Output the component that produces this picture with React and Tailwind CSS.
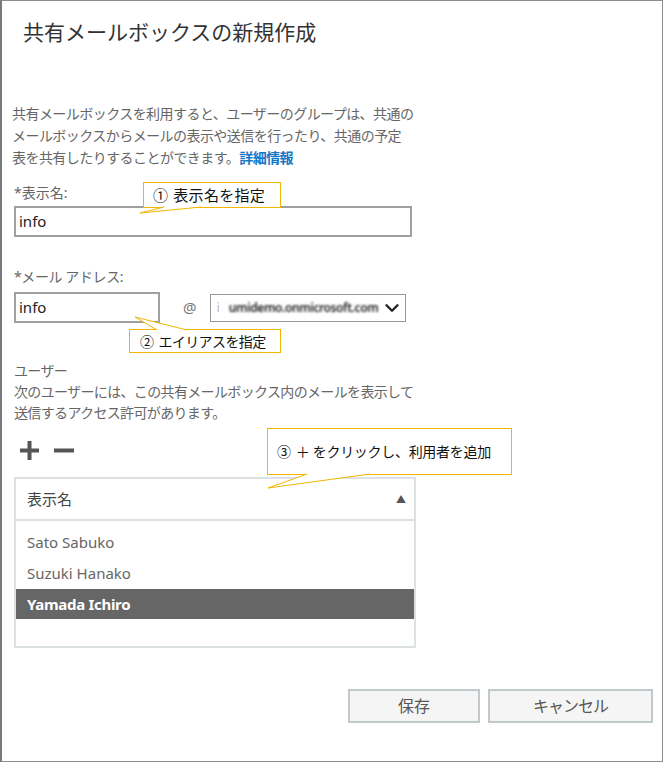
import React from "react";
import { ChevronDown } from "lucide-react";

const jp = { fontFamily: '"Noto Sans", "Noto Sans CJK JP", sans-serif' };

function Callout({ box, tail, num, text, textClass = "" }) {
  return (
    <>
      <div
        className={`absolute border border-[#f2b600] bg-white flex items-center text-[#111] ${textClass}`}
        style={{ left: box[0], top: box[1], width: box[2], height: box[3] }}
      >
        <span className="mr-[5px]">{num}</span>
        <span>{text}</span>
      </div>
      <svg className="absolute left-0 top-0 pointer-events-none" width="663" height="762">
        <polygon points={tail} fill="white" stroke="none" />
        <polyline points={tail} fill="none" stroke="#f2b600" strokeWidth="1" />
      </svg>
    </>
  );
}

export default function App() {
  return (
    <div style={jp} className="w-[663px] h-[762px] bg-white">
      <div className="relative w-[663px] h-[762px] border border-[#8c8c8c] border-l-2 border-l-[#7a7a7a] bg-white flex flex-col overflow-hidden">
        <h1 className="pl-[21px] pt-[17px] text-[21px] leading-[28px] text-[#333] font-normal tracking-[0px]">
          共有メールボックスの新規作成
        </h1>

        <div className="pl-[10px] mt-[57px] text-[14px] leading-[22px] text-[#666] tracking-[-0.55px]">
          <div>共有メールボックスを利用すると、ユーザーのグループは、共通の</div>
          <div>メールボックスからメールの表示や送信を行ったり、共通の予定</div>
          <div>
            表を共有したりすることができます。
            <span className="text-[#1677c9] font-semibold">詳細情報</span>
          </div>
        </div>

        <div className="pl-[12px] mt-[13px] text-[14px] leading-[22px] text-[#666]">*表示名:</div>
        <div className="ml-[12px] mt-[2px] w-[398px] h-[31px] border-2 border-[#a0a0a0] flex items-center pl-[3px] text-[15px] text-[#222]">
          info
        </div>

        <div className="pl-[12px] mt-[29px] text-[14px] leading-[22px] text-[#666] tracking-[-0.4px]">*メール アドレス:</div>
        <div className="ml-[12px] mt-[4px] flex items-center h-[31px]">
          <div className="w-[146px] h-[31px] border-2 border-[#a0a0a0] flex items-center pl-[3px] text-[15px] text-[#222]">
            info
          </div>
          <div className="ml-[23px] text-[15px] text-[#777]">@</div>
          <div className="ml-[13px] w-[196px] h-[28px] border border-[#999] flex items-center pl-[6px] pr-[2px]">
            <span className="text-[13px] text-[#bbb]">i</span>
            <span className="ml-[9px] text-[12px] font-semibold text-[#222] blur-[1.2px] tracking-[-0.4px] whitespace-nowrap">umidemo.onmicrosoft.com</span>
            <ChevronDown className="ml-auto" size={22} strokeWidth={2.6} color="#222" />
          </div>
        </div>

        <div className="pl-[12px] mt-[37px] text-[14px] leading-[21px] text-[#666] tracking-[-0.65px]">
          <div>ユーザー</div>
          <div>次のユーザーには、この共有メールボックス内のメールを表示して</div>
          <div>送信するアクセス許可があります。</div>
        </div>

        <div className="ml-[17px] mt-[17px] flex items-center gap-[14px] h-[20px]">
          <svg width="21" height="21" viewBox="0 0 21 21">
            <path d="M10.5 1v19M1 10.5h19" stroke="#555" strokeWidth="4" />
          </svg>
          <svg width="20" height="21" viewBox="0 0 20 21">
            <path d="M0 10.5h20" stroke="#555" strokeWidth="4" />
          </svg>
        </div>

        <div className="ml-[12px] mt-[17px] w-[402px] h-[171px] border-2 border-[#dce1e3] flex flex-col">
          <div className="h-[42px] border-b-2 border-[#dce1e3] flex items-center pl-[11px] pr-[8px] text-[15px] text-[#444]">
            <span>表示名</span>
            <span className="ml-auto text-[10px] text-[#555]">▲</span>
          </div>
          <div className="pt-[6px] flex flex-col text-[15px]">
            <div className="h-[31px] flex items-center pl-[11px] text-[#666]">Sato Sabuko</div>
            <div className="h-[31px] flex items-center pl-[11px] text-[#666]">Suzuki Hanako</div>
            <div className="h-[30px] flex items-center pl-[11px] bg-[#666] text-white font-bold tracking-[-0.3px]">Yamada Ichiro</div>
          </div>
        </div>

        <div className="mt-auto mb-[38px] mr-[9px] flex justify-end gap-[8px]">
          <button className="w-[132px] h-[34px] border-2 border-[#c2c9cc] bg-[#f5f5f5] text-[16px] text-[#555]">
            保存
          </button>
          <button className="w-[165px] h-[34px] border-2 border-[#c2c9cc] bg-[#f5f5f5] text-[16px] text-[#555] tracking-[-1px]">
            キャンセル
          </button>
        </div>

        <Callout
          box={[141, 181, 138, 26]}
          tail="162,206 138,212 199,206"
          num="①"
          text="表示名を指定"
          textClass="pl-[9px] text-[15px] tracking-[0.3px]"
        />
        <Callout
          box={[127, 328, 152, 24]}
          tail="155,329 133,316 185,329"
          num="②"
          text="エイリアスを指定"
          textClass="pl-[10px] text-[14px] tracking-[-0.6px]"
        />
        <Callout
          box={[265, 427, 245, 47]}
          tail="305,473 266,487 368,473"
          num="③"
          text="＋ をクリックし、利用者を追加"
          textClass="pl-[9px] text-[14px] tracking-[-0.3px]"
        />
      </div>
    </div>
  );
}
